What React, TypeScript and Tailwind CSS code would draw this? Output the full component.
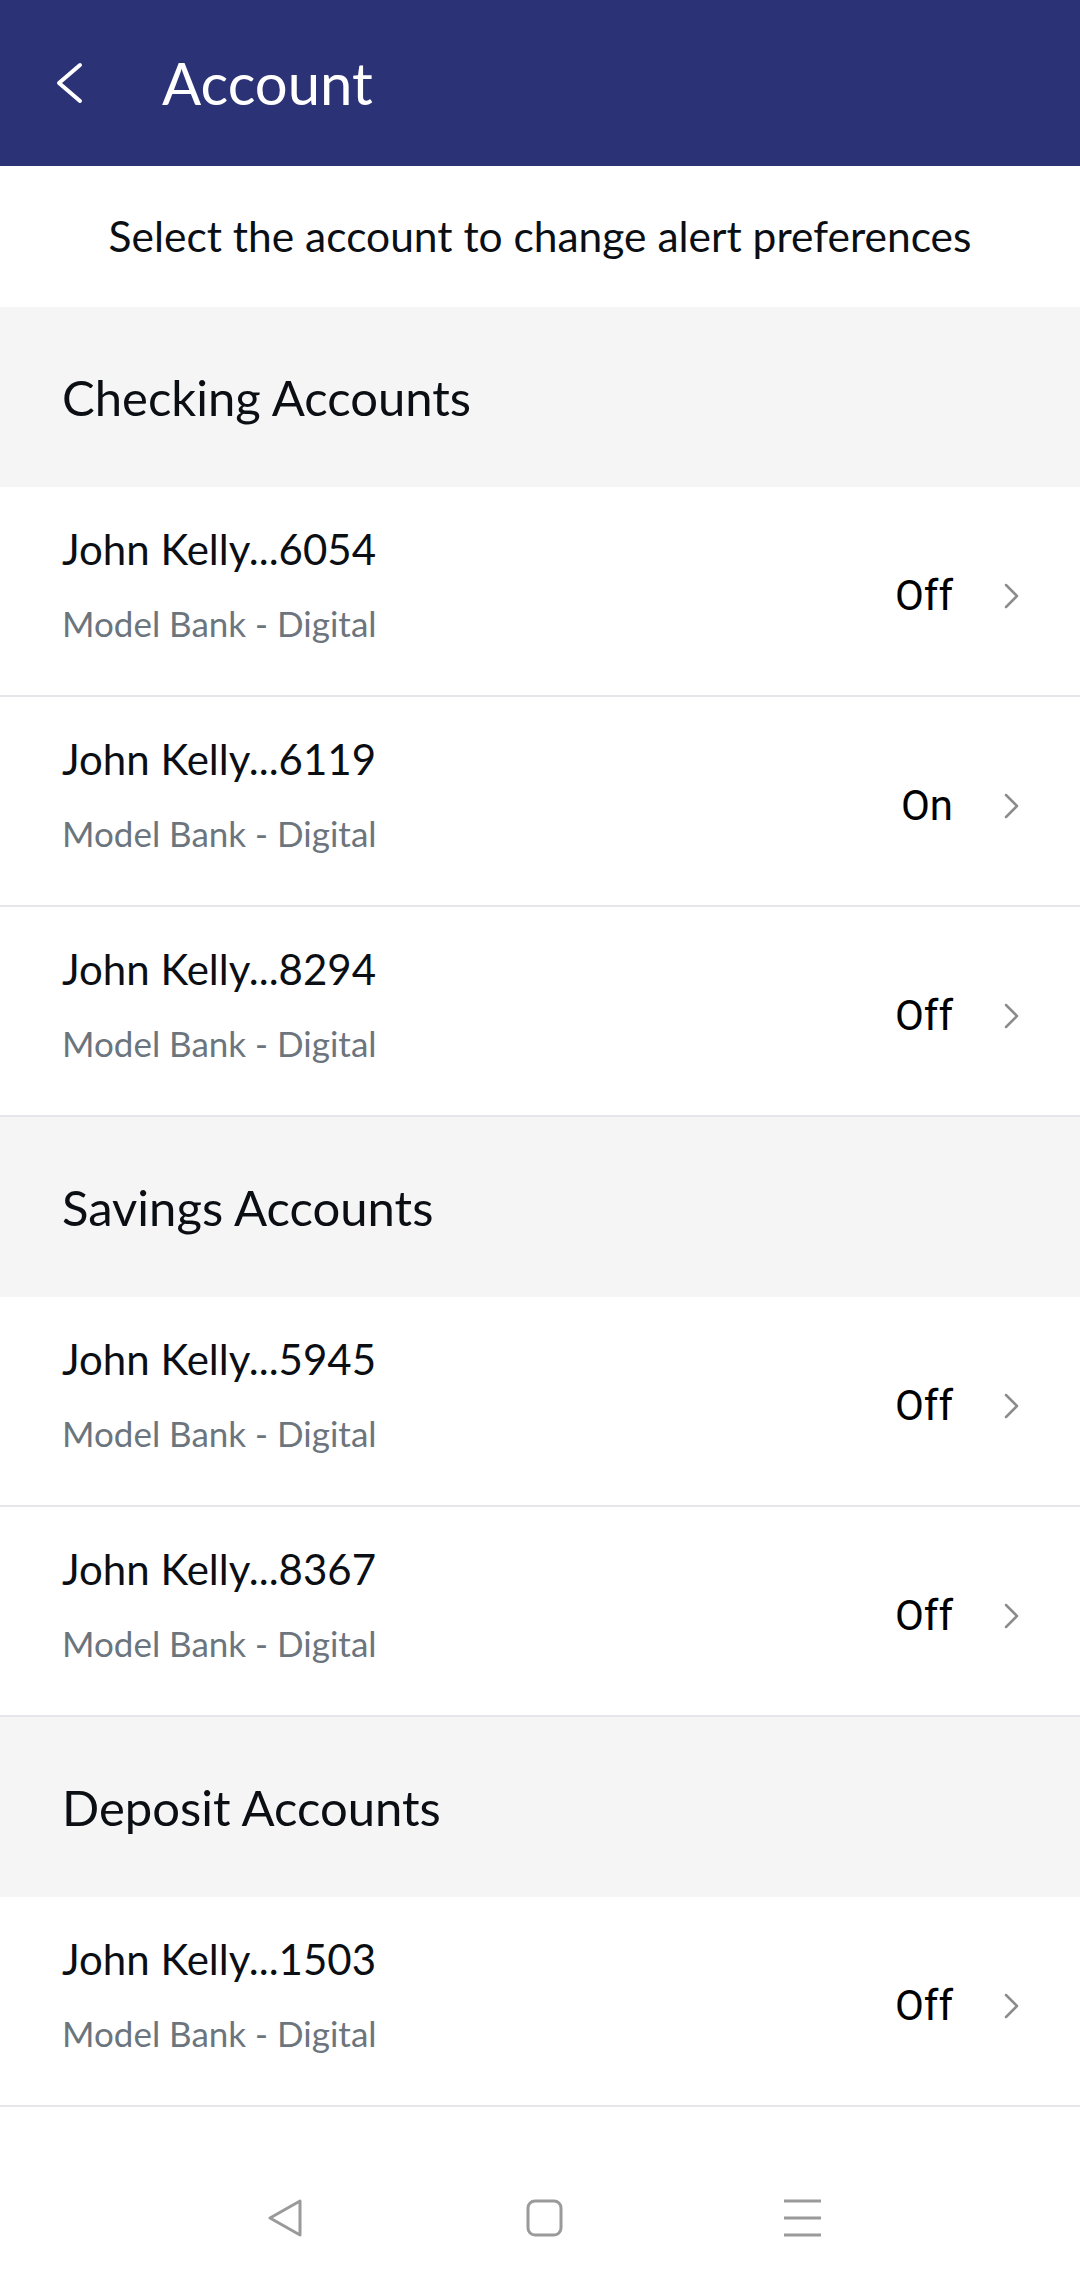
import React from 'react';

type Account = { name: string; bank: string; on: boolean };
type Section = { title: string; accounts: Account[] };

const sections: Section[] = [
  {
    title: 'Checking Accounts',
    accounts: [
      { name: 'John Kelly...6054', bank: 'Model Bank - Digital', on: false },
      { name: 'John Kelly...6119', bank: 'Model Bank - Digital', on: true },
      { name: 'John Kelly...8294', bank: 'Model Bank - Digital', on: false },
    ],
  },
  {
    title: 'Savings Accounts',
    accounts: [
      { name: 'John Kelly...5945', bank: 'Model Bank - Digital', on: false },
      { name: 'John Kelly...8367', bank: 'Model Bank - Digital', on: false },
    ],
  },
  {
    title: 'Deposit Accounts',
    accounts: [{ name: 'John Kelly...1503', bank: 'Model Bank - Digital', on: false }],
  },
];

const AccountRow: React.FC<{ account: Account }> = ({ account }) => (
  <div className="flex h-[210px] items-start justify-between border-b-2 border-[#e4e6ea] pl-[62px] pr-[61px]">
    <div className="flex flex-col pt-[36px]">
      <span className="text-[42px] leading-[52px] text-[#0b0f14]">{account.name}</span>
      <span className="mt-[22px] text-[35px] leading-[52px] text-[#6c757d]">{account.bank}</span>
    </div>
    <div className="flex h-[208px] items-center gap-[51px] pt-[9px]">
      <span className="font-['Roboto',sans-serif] text-[42px] leading-none text-black">
        {account.on ? 'On' : 'Off'}
      </span>
      <svg width="15" height="26" viewBox="0 0 15 26" fill="none">
        <polyline points="2,2 13,13 2,24" stroke="#8c8c8c" strokeWidth="2.5" strokeLinecap="round" strokeLinejoin="round" />
      </svg>
    </div>
  </div>
);

export default function App() {
  return (
    <div className="flex h-[2283px] w-full flex-col overflow-hidden bg-white font-['Lato',sans-serif]">
      {/* Top bar */}
      <div className="flex h-[166px] shrink-0 items-center bg-[#2b3275] pl-[55px]">
        <svg width="28" height="42" viewBox="0 0 28 42" fill="none">
          <polyline points="25,3 4,21 25,39" stroke="#ffffff" strokeWidth="4" strokeLinecap="round" strokeLinejoin="round" />
        </svg>
        <span className="ml-[79px] text-[58px] leading-none text-white">Account</span>
      </div>

      <div className="flex h-[141px] shrink-0 items-center justify-center">
        <span className="text-[42.5px] leading-none text-[#0b0f14]">Select the account to change alert preferences</span>
      </div>

      {sections.map((section) => (
        <div key={section.title} className="shrink-0">
          <div className="flex h-[180px] items-center bg-[#f5f5f6] pl-[62px]">
            <span className="text-[49px] leading-[60px] text-[#0b0f14]">{section.title}</span>
          </div>
          {section.accounts.map((a) => (
            <AccountRow key={a.name} account={a} />
          ))}
        </div>
      ))}

      <div className="flex-1" />

      {/* System nav bar */}
      <div className="flex h-[132px] shrink-0 items-start pt-[48px]">
        <svg className="ml-[266px]" width="38" height="38" viewBox="0 0 38 38" fill="none">
          <path d="M34 2 L4 19 L34 36 Z" stroke="#9a9a9a" strokeWidth="3" strokeLinejoin="round" />
        </svg>
        <svg className="ml-[222px]" width="38" height="38" viewBox="0 0 38 38" fill="none">
          <rect x="2" y="2" width="33" height="34" rx="7" stroke="#9a9a9a" strokeWidth="3" />
        </svg>
        <svg className="ml-[219px]" width="38" height="38" viewBox="0 0 38 38" fill="none">
          <line x1="1" y1="2" x2="38" y2="2" stroke="#9a9a9a" strokeWidth="3" />
          <line x1="1" y1="19" x2="38" y2="19" stroke="#9a9a9a" strokeWidth="3" />
          <line x1="1" y1="36" x2="38" y2="36" stroke="#9a9a9a" strokeWidth="3" />
        </svg>
      </div>
    </div>
  );
}
